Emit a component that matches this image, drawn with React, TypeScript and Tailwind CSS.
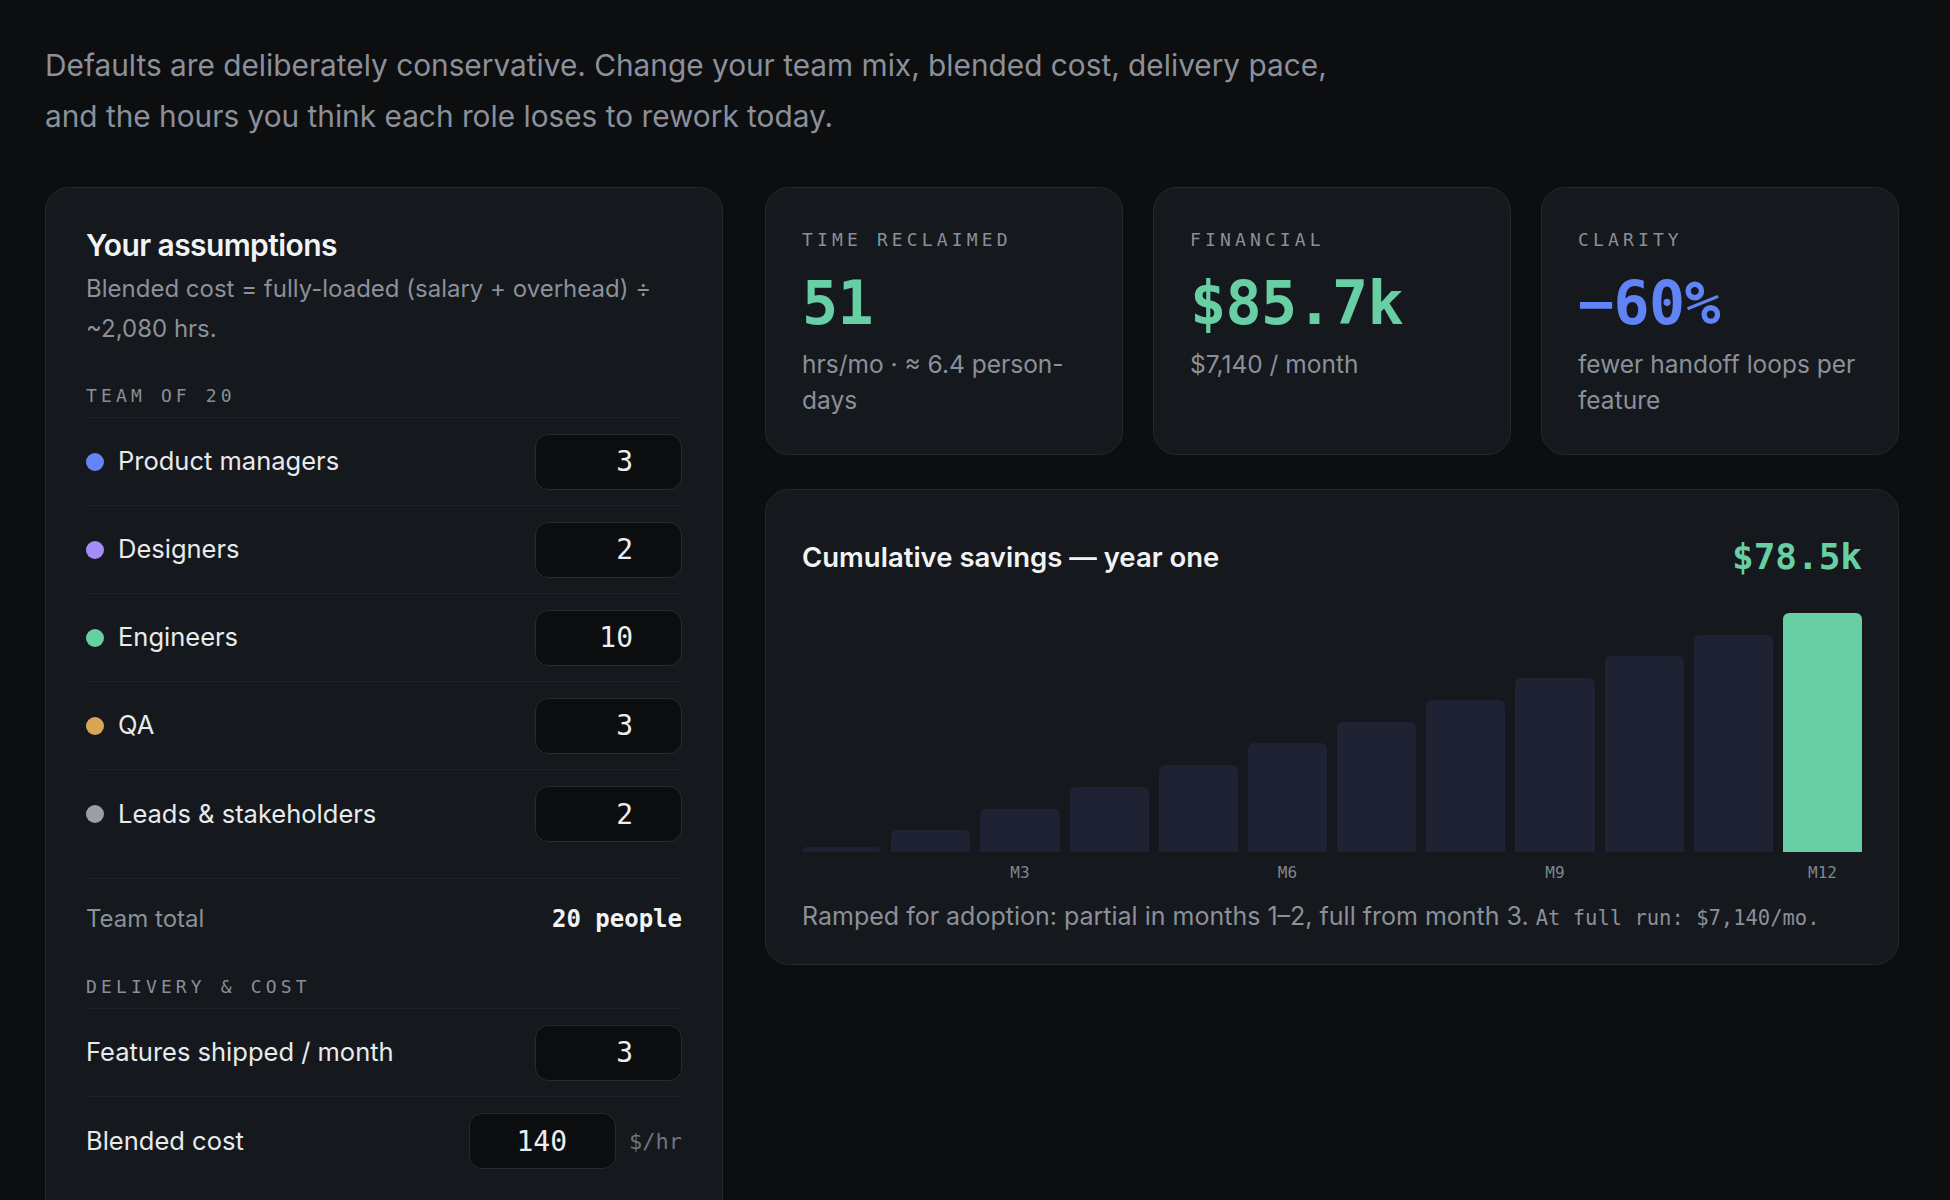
import { useMemo, useState } from "react";

type Role = {
    key: string;
    label: string;
    dot: string;
    hoursPerFeature: number;
};

const ROLES: Role[] = [
    { key: "pm", label: "Product managers", dot: "bg-[#6584f8]", hoursPerFeature: 1.5 },
    { key: "design", label: "Designers", dot: "bg-[#a58cf6]", hoursPerFeature: 1.5 },
    { key: "eng", label: "Engineers", dot: "bg-[#66cfa3]", hoursPerFeature: 0.6 },
    { key: "qa", label: "QA", dot: "bg-[#d9a656]", hoursPerFeature: 0.5 },
    { key: "leads", label: "Leads & stakeholders", dot: "bg-[#9b9fa8]", hoursPerFeature: 1 },
];

// adoption ramp for the first months, full effect afterwards
const RAMP = [0.25, 0.75];

const money = (n: number) => `$${Math.round(n).toLocaleString("en-US")}`;
const moneyK = (n: number) => `$${(n / 1000).toFixed(1)}k`;

const NumberBox = ({ value, onChange }: { value: number; onChange: (v: number) => void }) => (
    <input
        type="text"
        inputMode="numeric"
        value={value}
        onChange={(e) => onChange(Number(e.target.value.replace(/\D/g, "")) || 0)}
        className="w-[147px] h-[56px] rounded-[13px] border border-[#272a30] bg-[#0c0d0f] pr-[48px] text-right
            font-['DejaVu_Sans_Mono',monospace] text-[28px] text-[#eceef1] outline-none focus:border-[#3a3f48]"
    />
);

const SectionLabel = ({ children, className = "" }: { children: string; className?: string }) => (
    <div className={`pb-2 border-b border-[#1f2227] font-['DejaVu_Sans_Mono',monospace] text-[18px] leading-[27px] tracking-[0.23em] text-[#8a8f98] ${className}`}>
        {children}
    </div>
);

const StatCard = ({ label, value, valueColor, sub }: { label: string; value: string; valueColor: string; sub: string }) => (
    <div className="rounded-3xl border border-[#25282e] bg-[#15181c] px-9 pt-[38px] pb-[36px]">
        <div className="font-['DejaVu_Sans_Mono',monospace] text-[18px] leading-[27px] tracking-[0.23em] text-[#8a8f98]">{label}</div>
        <div className={`mt-5 font-['DejaVu_Sans_Mono',monospace] font-bold text-[60px] leading-[60px] tracking-[-0.01em] ${valueColor}`}>
            {value}
        </div>
        <p className="mt-[13px] text-[24.5px] leading-[36px] text-[#8b909a]">{sub}</p>
    </div>
);

export default function App() {
    const [team, setTeam] = useState<Record<string, number>>({ pm: 3, design: 2, eng: 10, qa: 3, leads: 2 });
    const [features, setFeatures] = useState(3);
    const [cost, setCost] = useState(140);

    const teamTotal = ROLES.reduce((sum, r) => sum + (team[r.key] || 0), 0);

    const { hours, monthly, yearly, months } = useMemo(() => {
        const perFeature = ROLES.reduce((sum, r) => sum + (team[r.key] || 0) * r.hoursPerFeature, 0);
        const hours = Math.round(perFeature * features);
        const monthly = hours * cost;
        let running = 0;
        const months = Array.from({ length: 12 }, (_, i) => {
            running += monthly * (RAMP[i] ?? 1);
            return running;
        });
        return { hours, monthly, yearly: monthly * 12, months };
    }, [team, features, cost]);

    const yearOne = months[months.length - 1];

    return (
        <div className="min-h-screen bg-[#0d0e10] pl-[45px] pr-[51px] pt-[40px] font-['Inter',sans-serif]">
            <p className="max-w-[1320px] text-[29.8px] leading-[51px] text-[#8b909b]">
                Defaults are deliberately conservative. Change your team mix, blended cost, delivery pace, and the hours you think each role loses to rework today.
            </p>

            <div className="mt-[45px] grid grid-cols-[678px_1fr] gap-[42px] items-start">
                {/* Assumptions */}
                <section className="rounded-3xl border border-[#25282e] bg-[#15181c] px-10 pt-10 pb-10">
                    <h2 className="text-[30px] leading-[34px] font-semibold tracking-[-0.02em] text-[#f2f3f5]">Your assumptions</h2>
                    <p className="mt-[7px] text-[24px] leading-[40px] text-[#8b909a]">
                        Blended cost = fully-loaded (salary + overhead) ÷ ~2,080 hrs.
                    </p>

                    <SectionLabel className="mt-[33px]">TEAM OF {String(teamTotal)}</SectionLabel>
                    <div>
                        {ROLES.map((role, i) => (
                            <div key={role.key}
                                className={`h-[88px] flex items-center justify-between ${i < ROLES.length - 1 ? "border-b border-[#1f2227]" : ""}`}
                            >
                                <div className="flex items-center gap-[14px]">
                                    <span className={`w-[18px] h-[18px] rounded-full ${role.dot}`} />
                                    <span className="text-[25.5px] text-[#e8eaed]">{role.label}</span>
                                </div>
                                <NumberBox
                                    value={team[role.key]}
                                    onChange={(v) => setTeam((t) => ({ ...t, [role.key]: v }))}
                                />
                            </div>
                        ))}
                    </div>

                    <div className="mt-5 border-t border-[#1f2227] pt-[22px] pb-[18px] flex items-center justify-between leading-[36px]">
                        <span className="text-[24px] text-[#8b909a]">Team total</span>
                        <span className="font-['DejaVu_Sans_Mono',monospace] font-bold text-[24px] text-[#f2f3f5]">{teamTotal} people</span>
                    </div>

                    <SectionLabel className="mt-[18px]">DELIVERY & COST</SectionLabel>
                    <div className="h-[88px] flex items-center justify-between border-b border-[#1f2227]">
                        <span className="text-[25.5px] text-[#e8eaed]">Features shipped / month</span>
                        <NumberBox value={features} onChange={setFeatures} />
                    </div>
                    <div className="h-[88px] flex items-center justify-between">
                        <span className="text-[25.5px] text-[#e8eaed]">Blended cost</span>
                        <div className="flex items-center gap-[13px]">
                            <NumberBox value={cost} onChange={setCost} />
                            <span className="font-['DejaVu_Sans_Mono',monospace] text-[22px] text-[#6f747d]">$/hr</span>
                        </div>
                    </div>
                </section>

                {/* Results */}
                <div className="flex flex-col">
                    <div className="grid grid-cols-3 gap-[30px]">
                        <StatCard
                            label="TIME RECLAIMED"
                            value={String(hours)}
                            valueColor="text-[#67cfa3]"
                            sub={`hrs/mo · ≈ ${(hours / 8).toFixed(1)} person-days`}
                        />
                        <StatCard
                            label="FINANCIAL"
                            value={moneyK(yearly)}
                            valueColor="text-[#67cfa3]"
                            sub={`${money(monthly)} / month`}
                        />
                        <StatCard
                            label="CLARITY"
                            value="−60%"
                            valueColor="text-[#6083f6]"
                            sub="fewer handoff loops per feature"
                        />
                    </div>

                    <div className="mt-[34px] rounded-3xl border border-[#25282e] bg-[#15181c] px-9 pt-[47px] pb-[29px]">
                        <div className="flex items-center justify-between">
                            <h3 className="text-[27.5px] leading-[40px] font-semibold text-[#f2f3f5]">Cumulative savings — year one</h3>
                            <span className="font-['DejaVu_Sans_Mono',monospace] font-bold text-[36px] leading-[40px] text-[#67cfa3]">{moneyK(yearOne)}</span>
                        </div>

                        <div className="mt-[36px] flex gap-[10px]">
                            {months.map((total, i) => {
                                const last = i === months.length - 1;
                                const label = (i + 1) % 3 === 0 ? `M${i + 1}` : "";
                                return (
                                    <div key={i} className="flex-1 flex flex-col">
                                        <div className="h-[239px] flex items-end">
                                            <div
                                                className={`w-full rounded-t-[6px] ${last ? "bg-[#67cfa3]" : "bg-[#1e2233]"}`}
                                                style={{ height: `${(total / yearOne) * 100}%` }}
                                            />
                                        </div>
                                        <div className="mt-2 h-[25px] text-center font-['DejaVu_Sans_Mono',monospace] text-[16px] leading-[25px] text-[#80858e]">
                                            {label}
                                        </div>
                                    </div>
                                );
                            })}
                        </div>

                        <p className="mt-[14px] text-[25px] leading-[34px] text-[#8b909a]">
                            Ramped for adoption: partial in months 1–2, full from month 3.{" "}
                            <span className="font-['DejaVu_Sans_Mono',monospace] text-[20.5px]">At full run: {money(monthly)}/mo.</span>
                        </p>
                    </div>
                </div>
            </div>
        </div>
    );
}
